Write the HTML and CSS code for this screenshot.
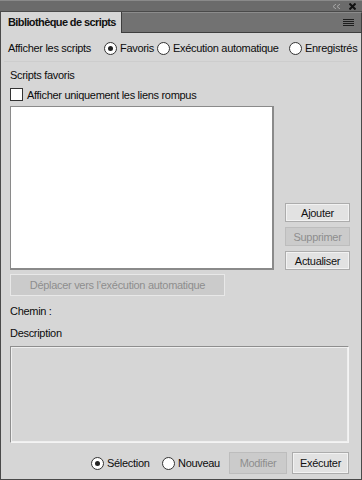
FILE: index.html
```html
<!DOCTYPE html>
<html lang="fr">
  <head>
    <meta charset="UTF-8" />
    <title>Bibliothèque de scripts</title>
    <link rel="stylesheet" href="styles.css">
  </head>
  <body>
    <div class="window">
      <!-- Barre du haut -->
      <div class="topbar">
        <svg class="collapse" width="7" height="5" viewBox="0 0 7 5">
          <path d="M3 0 L0 2.5 L3 5 M7 0 L4 2.5 L7 5" fill="none" stroke="#a8a8a8" stroke-width="1" />
        </svg>
        <svg class="close" width="7" height="7" viewBox="0 0 7 7">
          <path d="M0.5 0.5 L6.5 6.5 M6.5 0.5 L0.5 6.5" stroke="#111" stroke-width="2" />
        </svg>
      </div>
      <div class="tabrow">
        <div class="tab">Bibliothèque de scripts</div>
        <div class="tabfill">
          <svg class="menu" width="11" height="8" viewBox="0 0 11 8">
            <rect x="0" y="0" width="11" height="1" fill="#1e1e1e" />
            <rect x="0" y="2" width="11" height="1" fill="#1e1e1e" />
            <rect x="0" y="4" width="11" height="1" fill="#1e1e1e" />
            <rect x="0" y="6" width="11" height="1" fill="#1e1e1e" />
          </svg>
        </div>
      </div>

      <div class="panel">
        <div class="show-row">
          <span class="label">Afficher les scripts</span>
          <label class="radio"><span class="dot checked"></span>Favoris</label>
          <label class="radio"><span class="dot"></span>Exécution automatique</label>
          <label class="radio"><span class="dot"></span>Enregistrés</label>
        </div>

        <div class="group">
          <div class="group-title">Scripts favoris</div>
          <label class="check"><span class="box"></span>Afficher uniquement les liens rompus</label>

          <div class="list-area">
            <div class="listbox"></div>
            <div class="side-buttons">
              <button class="btn">Ajouter</button>
              <button class="btn disabled">Supprimer</button>
              <button class="btn">Actualiser</button>
            </div>
          </div>

          <button class="btn disabled move">Déplacer vers l’exécution automatique</button>

          <div class="field">Chemin :</div>
          <div class="field">Description</div>
          <div class="descbox"></div>
        </div>

        <div class="bottom-row">
          <label class="radio"><span class="dot checked"></span>Sélection</label>
          <label class="radio"><span class="dot"></span>Nouveau</label>
          <button class="btn disabled wide">Modifier</button>
          <button class="btn wide">Exécuter</button>
        </div>
      </div>
    </div>
  </body>
</html>
```

FILE: styles.css
```css
* {
  box-sizing: border-box;
  margin: 0;
  padding: 0;
}
body {
  font-family: "Liberation Sans", Arial, sans-serif;
  font-size: 11px;
  letter-spacing: -0.3px;
  white-space: nowrap;
  color: #0c0c0c;
  background: #d6d6d6;
}
.window {
  width: 362px;
  height: 480px;
  display: flex;
  flex-direction: column;
}

/* Barre du haut */
.topbar {
  height: 11px;
  background: #6b6b6b;
  border-top: 1px solid #8a8a8a;
  display: flex;
  justify-content: flex-end;
  align-items: center;
  gap: 9px;
  padding-right: 6px;
}
.tabrow {
  height: 22px;
  display: flex;
  background: #727272;
  border-top: 1px solid #4a4a4a;
}
.tab {
  width: 122px;
  background: #d6d6d6;
  border-left: 1px solid #4a4a4a;
  border-right: 1px solid #3e3e3e;
  font-weight: 700;
  font-size: 11px;
  letter-spacing: -0.6px;
  padding: 4px 0 0 7px;
  color: #111;
}
.tabfill {
  flex: 1;
  display: flex;
  justify-content: flex-end;
  align-items: center;
  padding-right: 7px;
  border-top: 1px solid #8c8c8c;
  border-right: 1px solid #3e3e3e;
  border-bottom: 1px solid #3e3e3e;
}

/* Panneau */
.panel {
  flex: 1;
  background: #d6d6d6;
  border-left: 1px solid #4a4a4a;
  border-right: 1px solid #4a4a4a;
  border-bottom: 1px solid #4a4a4a;
  padding: 6px 11px 5px 9px;
  display: flex;
  flex-direction: column;
}
.show-row {
  display: flex;
  align-items: center;
  height: 18px;
}
.show-row > * {
  flex: none;
}
.show-row .label {
  width: 96px;
  margin-left: -2px;
}
.radio {
  display: flex;
  align-items: center;
  gap: 3px;
}
.show-row .radio:nth-child(2) {
  width: 53px;
}
.show-row .radio:nth-child(3) {
  width: 132px;
}
.dot {
  width: 13px;
  height: 13px;
  border-radius: 50%;
  border: 1px solid #333;
  background: #fff;
  position: relative;
  flex: none;
}
.dot.checked::after {
  content: "";
  position: absolute;
  top: 3px;
  left: 3px;
  width: 5px;
  height: 5px;
  border-radius: 50%;
  background: #222;
}

.group {
  margin-top: 4px;
  border-top: 1px solid #cdcdcd;
  margin-left: -6px;
  padding-left: 6px;
  display: flex;
  flex-direction: column;
}
.group-title {
  margin-top: 6px;
  height: 14px;
  line-height: 14px;
}
.check {
  display: flex;
  align-items: center;
  gap: 4px;
  margin-top: 6px;
  height: 13px;
}
.box {
  width: 13px;
  height: 13px;
  border: 1px solid #333;
  background: #fff;
}

.list-area {
  display: flex;
  align-items: flex-end;
  margin-top: 5px;
}
.listbox {
  width: 264px;
  height: 164px;
  background: #fff;
  border: 1px solid #8a8a8a;
  border-right-width: 2px;
  border-bottom-width: 2px;
}
.side-buttons {
  margin-left: 11px;
  display: flex;
  flex-direction: column;
  gap: 5px;
}
.side-buttons .btn {
  width: 65px;
  height: 19px;
}

.btn {
  font-family: "Liberation Sans", Arial, sans-serif;
  font-size: 11px;
  letter-spacing: -0.3px;
  color: #111;
  background: #e2e2e2;
  border: 1px solid #acacac;
  box-shadow: inset 0 0 0 1px #f2f2f2;
  height: 21px;
}
.btn.disabled {
  color: #8e8e8e;
  background: #cbcbcb;
  border-color: #bdbdbd;
  box-shadow: none;
}
.btn.move {
  margin-top: 4px;
  width: 215px;
  height: 22px;
  border: 1px solid #e8e8e8;
}
.field {
  margin-top: 8px;
  height: 14px;
  line-height: 14px;
}
.field + .field {
  margin-top: 8px;
}
.descbox {
  margin-top: 6px;
  height: 97px;
  width: 339px;
  border: 1px solid #8e8e8e;
  border-right-color: #f4f4f4;
  border-bottom-color: #f4f4f4;
  box-shadow: inset 0 0 0 1px #efefef;
  background: #d6d6d6;
}

.bottom-row {
  margin-top: auto;
  margin-right: 1px;
  display: flex;
  align-items: center;
  justify-content: flex-end;
}
.bottom-row > * {
  flex: none;
}
.bottom-row .radio {
  width: 71px;
}
.bottom-row .radio + .radio {
  width: 67px;
}
.bottom-row .btn.wide {
  width: 58px;
  height: 22px;
}
.bottom-row .btn.wide + .btn.wide {
  margin-left: 5px;
  width: 57px;
}
```
